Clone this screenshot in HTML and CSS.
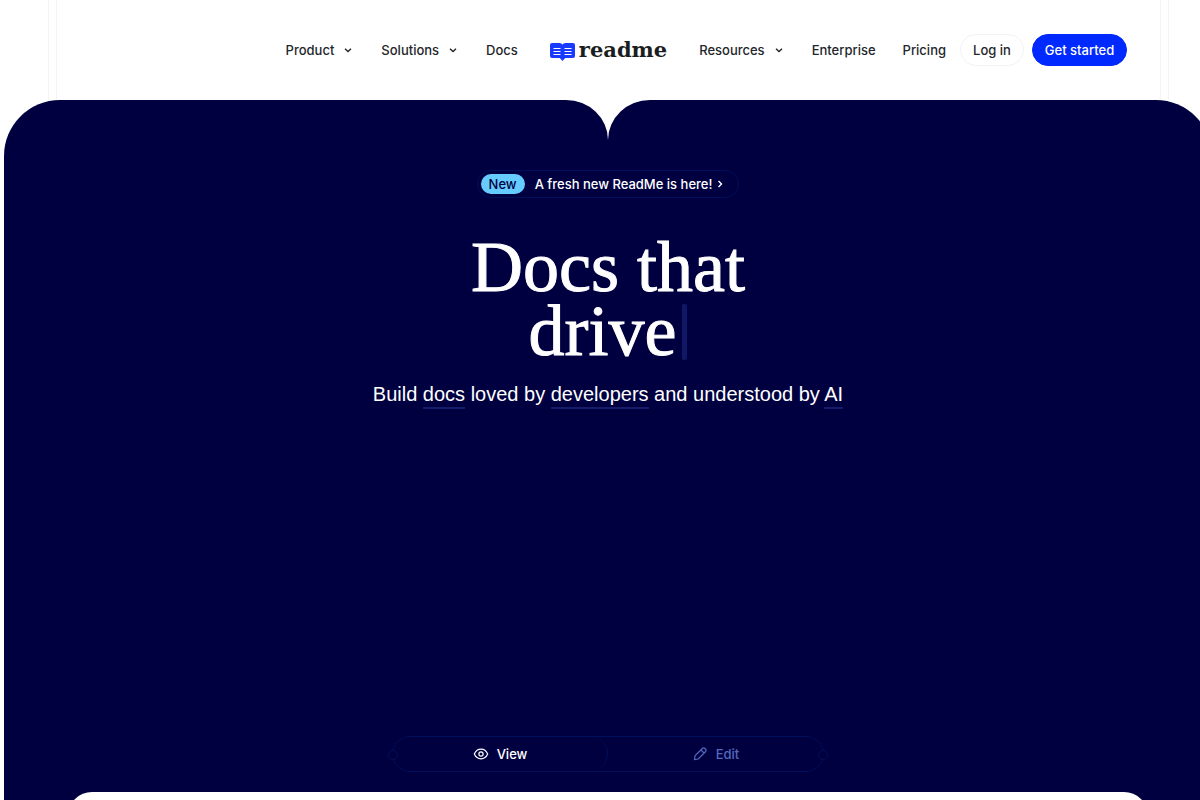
FILE: index.html
```html
<!DOCTYPE html>
<html lang="en">
<head>
<meta charset="utf-8">
<meta name="viewport" content="width=device-width, initial-scale=1">
<title>ReadMe</title>
<link rel="stylesheet" href="styles.css">
</head>
<body>
<div class="page">
  <header class="header">
    <nav class="nav" aria-label="Main">
      <div class="nav-group nav-group-left">
        <button class="nav-item" type="button">Product
          <svg class="chevron" viewBox="0 0 12 12" aria-hidden="true"><path d="M3 4.700 6 7.500l3-2.800"/></svg></button>
        <button class="nav-item" type="button">Solutions
          <svg class="chevron" viewBox="0 0 12 12" aria-hidden="true"><path d="M3 4.700 6 7.500l3-2.800"/></svg></button>
        <a class="nav-item" href="#">Docs</a>
      </div>
      <a class="logo" href="#">
        <svg class="logo-mark" viewBox="0 0 25 18" aria-hidden="true">
          <path class="logo-book" d="M2 0h7.500c1.400 0 2.500.7 3 1.800C13 .7 14.100 0 15.500 0H23a2 2 0 0 1 2 2v11a2 2 0 0 1-2 2h-6.500c-1.200 0-2 .5-2.400 1.300L12.500 18l-1.600-1.700C10.500 15.500 9.700 15 8.500 15H2a2 2 0 0 1-2-2V2a2 2 0 0 1 2-2z"/>
          <path class="logo-lines" d="M3.500 5.500h7M3.500 8.500h7M3.500 11.500h7M14.500 5.500h7M14.500 8.500h7M14.500 11.500h7"/>
        </svg>
        <span class="logo-text">readme</span>
      </a>
      <div class="nav-group">
        <button class="nav-item" type="button">Resources
          <svg class="chevron" viewBox="0 0 12 12" aria-hidden="true"><path d="M3 4.700 6 7.500l3-2.800"/></svg></button>
        <a class="nav-item" href="#">Enterprise</a>
        <a class="nav-item" href="#">Pricing</a>
        <div class="actions">
          <a class="pill" href="#">Log in</a>
          <a class="pill pill-primary" href="#">Get started</a>
        </div>
      </div>
    </nav>
  </header>
  <main class="hero">
    <a class="notice" href="#">
      <span class="badge">New</span>
      <span>A fresh new ReadMe is here!</span>
      <svg class="notice-arrow" viewBox="0 0 6 8" aria-hidden="true"><path d="M1.500 1 4.500 4l-3 3"/></svg>
    </a>
    <h1 class="title">Docs that<br>drive<span class="caret"></span></h1>
    <p class="subtitle">Build <span class="term">docs</span> loved by <span class="term">developers</span> and understood by <span class="term">AI</span></p>
    <div class="switch">
      <button class="tab tab-active" type="button">
        <svg class="tab-icon" viewBox="0 0 16 16" aria-hidden="true"><path d="M1.300 8C2.700 5 5.100 3.200 8 3.200S13.300 5 14.700 8c-1.400 3-3.800 4.800-6.700 4.800S2.700 11 1.300 8z"/><circle cx="8" cy="8" r="2.100"/></svg>
        View</button>
      <button class="tab" type="button">
        <svg class="tab-icon" viewBox="0 0 16 16" aria-hidden="true"><path d="M2.500 13.500l.5-3.700 7.300-7.300a1.900 1.900 0 0 1 2.700 0l.5.500a1.900 1.900 0 0 1 0 2.700L6.200 13l-3.700.5zM9 4l3 3"/></svg>
        Edit</button>
    </div>
    <section class="preview" aria-label="Preview"></section>
  </main>
</div>
</body>
</html>
```
FILE: styles.css
```css
* {
  box-sizing: border-box;
}

body {
  margin: 0;
  overflow: hidden;
  background: #fff;
  color: #23262b;
  font: 500 13px/20px Inter, "Liberation Sans", sans-serif;
}

a {
  color: inherit;
  text-decoration: none;
}

button {
  padding: 0;
  border: 0;
  background: none;
  color: inherit;
  font: inherit;
  cursor: pointer;
}

svg {
  flex: none;
  fill: none;
  stroke: currentColor;
}

.page {
  display: flex;
  flex-direction: column;
  width: calc(100% + 16px);
  min-height: 100vh;
}

/* Header */
.header {
  height: 100px;
  margin: 0 47px 0 48px;
  padding: 0 7px;
  border: solid #f3f3f5;
  border-width: 0 1px;
}

.nav {
  display: grid;
  grid-template-columns: 1fr auto 1fr;
  gap: 32px;
  align-items: center;
  height: 100%;
  border: solid #f3f3f5;
  border-width: 0 1px;
}

.nav-group {
  display: flex;
  gap: 27px;
  align-items: center;
  white-space: nowrap;
}

.nav-group-left {
  justify-content: flex-end;
}

.nav-item {
  display: flex;
  gap: 8px;
  align-items: center;
}

.chevron {
  width: 12px;
  height: 12px;
  stroke-width: 1.4;
}

.logo {
  display: flex;
  gap: 4px;
  align-items: center;
  color: #1b1e20;
}

.logo-mark {
  width: 25px;
  height: 18px;
  margin-top: 4px;
}

.logo-book {
  fill: #183bff;
  stroke: none;
}

.logo-lines {
  stroke: #fff;
}

.logo-text {
  font: bold 21px/24px "DejaVu Serif", serif;
}

.actions {
  display: flex;
  gap: 8px;
  margin-left: -13px;
}

.pill {
  padding: 5px 12px;
  border: 1px solid #f3f3f5;
  border-radius: 16px;
}

.pill-primary {
  border-color: #0029ff;
  background: #0029ff;
  color: #fff;
}

/* Hero */
.hero {
  display: flex;
  flex: 1;
  flex-direction: column;
  align-items: center;
  position: relative;
  margin: 0 4px;
  padding-top: 70px;
  color: #fff;
}

.hero::before,
.hero::after {
  content: "";
  position: absolute;
  z-index: -1;
  top: 0;
  bottom: 0;
  width: 50%;
  background: #000040;
}

.hero::before {
  left: 0;
  border-radius: 56px 42px 0 0 / 56px 40px 0 0;
}

.hero::after {
  right: 0;
  border-radius: 42px 56px 0 0 / 40px 56px 0 0;
}

.notice {
  display: flex;
  align-items: center;
  height: 28px;
  padding: 0 15px 0 3px;
  border: 1px solid #000f5a;
  border-radius: 14px;
}

.badge {
  margin-right: 10px;
  padding: 0 8px;
  border-radius: 10px;
  background: #66ccff;
  color: #000040;
}

.notice-arrow {
  width: 6px;
  height: 8px;
  margin-left: 5px;
  stroke-width: 1.4;
}

.title {
  margin: 37px 0 0;
  font: 72px/64px "Liberation Serif", serif;
  text-align: center;
  -webkit-text-stroke: 1px;
}

.caret {
  display: inline-block;
  width: 5px;
  height: 56px;
  margin-left: 6px;
  border-radius: 2px;
  background: #101764;
  vertical-align: -5px;
}

.subtitle {
  margin: 17px 0 0;
  font: 20px/28px "Liberation Sans", sans-serif;
}

.term {
  padding-bottom: 2px;
  border-bottom: 2px solid #151d6b;
}

.switch {
  display: grid;
  grid-template-columns: 1fr 1fr;
  position: relative;
  width: 432px;
  height: 36px;
  margin-top: auto;
  border: 1px solid #000f5a;
  border-radius: 18px;
}

.switch::before,
.switch::after {
  content: "";
  position: absolute;
  top: 13px;
  width: 8px;
  height: 8px;
  border: 1px solid #000f5a;
  border-radius: 50%;
  background: #000040;
}

.switch::before {
  left: -5px;
}

.switch::after {
  right: -5px;
}

.tab {
  display: flex;
  gap: 8px;
  align-items: center;
  justify-content: center;
  color: #5468bd;
}

.tab-active {
  border-right: 1px solid #000f5a;
  border-radius: 18px;
  color: #fff;
}

.tab-icon {
  width: 16px;
  height: 16px;
  stroke-width: 1.2;
}

.preview {
  align-self: stretch;
  height: 8px;
  margin: 20px 64px 0;
  overflow: hidden;
}

.preview::before {
  content: "";
  display: block;
  height: 80px;
  border-radius: 24px;
  background: #fff;
}
```
